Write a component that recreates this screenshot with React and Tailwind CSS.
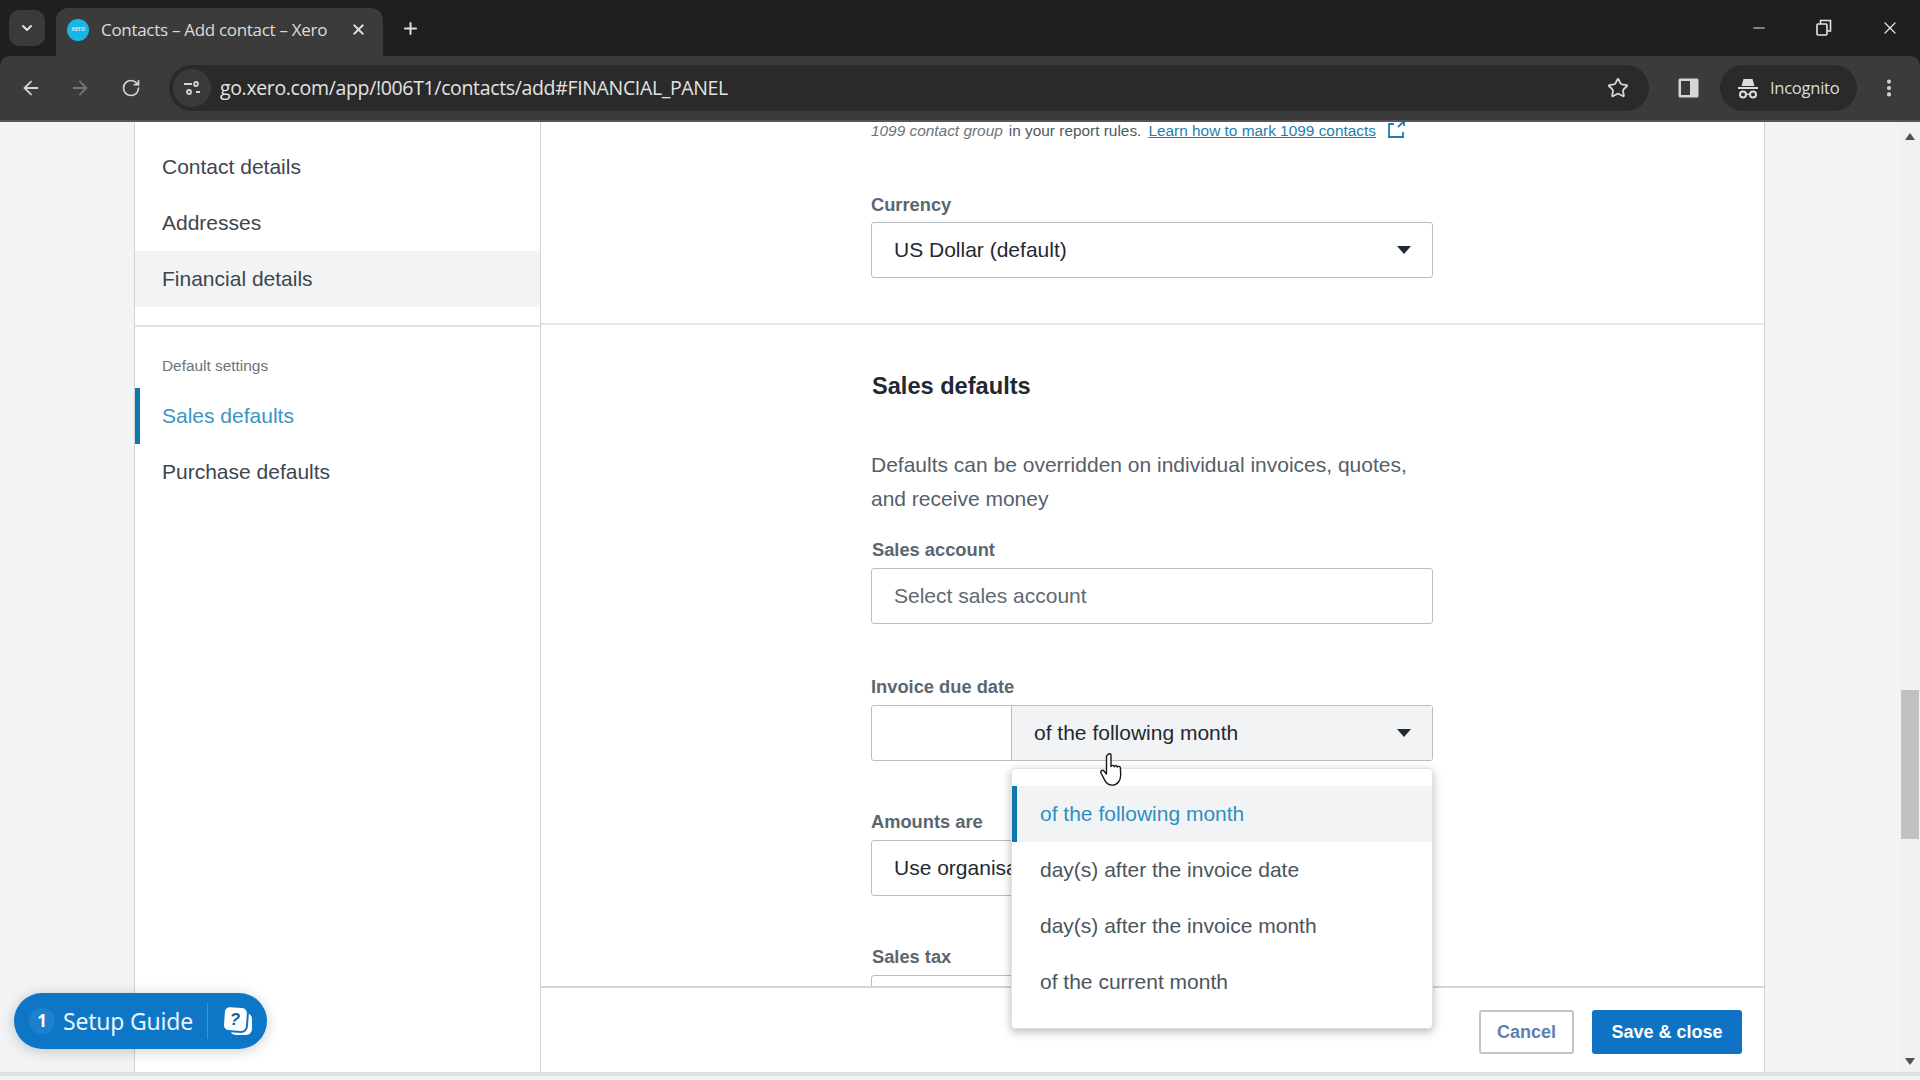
import { ArrowLeft, ArrowRight, RotateCw, Star, X, Plus, Minus, ChevronDown, EllipsisVertical } from "lucide-react";

const OPTIONS = ["of the following month", "day(s) after the invoice date", "day(s) after the invoice month", "of the current month"];

const Caret = () => (
  <svg width="14" height="8" viewBox="0 0 14 8" className="absolute right-[21px] top-1/2 -translate-y-1/2">
    <path d="M0 0h14L7 8z" fill="#1f2933" />
  </svg>
);

const Label = ({ children, className = "" }) => (
  <div className={`text-[18.3px] leading-[22px] font-bold text-[#5a6670] ${className}`}>{children}</div>
);

const Field = ({ children, className = "" }) => (
  <div className={`relative h-[56px] w-[562px] rounded-[3px] border border-[#b8bdc2] bg-white flex items-center pl-[22px] text-[21px] text-[#1f2933] ${className}`}>
    {children}
  </div>
);

const SideItem = ({ children, className = "" }) => (
  <div className={`h-[56px] flex items-center pl-[27px] text-[21px] text-[#3c4650] ${className}`}>{children}</div>
);

const IncognitoIcon = () => (
  <svg width="22" height="21" viewBox="0 0 22 21" fill="#dcdcdc">
    <path d="M6.500 1h9l2 7h-13z" />
    <rect x="1" y="9" width="20" height="2" />
    <circle cx="6" cy="16.500" r="3" fill="none" stroke="#dcdcdc" strokeWidth="2" />
    <circle cx="16" cy="16.500" r="3" fill="none" stroke="#dcdcdc" strokeWidth="2" />
    <rect x="9" y="15.500" width="4" height="1.500" />
  </svg>
);

const HandCursor = () => (
  <svg width="26" height="36" viewBox="0 0 26 36" className="absolute left-[1099px] top-[752px]">
    <path d="M9 2.500c1.300-1.500 3-.8 3 1v11c.3-1.500 3-1.500 3.200.2 .3-1.500 3-1.300 3.200.4 .4-1.200 2.900-.9 3 1l.3 7c0 5-3 10-8.500 10-4 0-6-2-7.500-5L2 21c-1-2 1.500-3.500 3-2l2.500 3V4z" fill="#fff" stroke="#16181a" strokeWidth="1.400" strokeLinejoin="round" />
  </svg>
);

const HelpIcon = () => (
  <svg width="30" height="30" viewBox="0 0 30 30">
    <rect x="7" y="7" width="22" height="22" rx="6" fill="#fff" />
    <rect x="0.500" y="0.500" width="24" height="25" rx="6" fill="#fff" stroke="#0e76c6" strokeWidth="2" transform="rotate(4 12 12)" />
    <text x="12" y="19" textAnchor="middle" fontSize="17" fontWeight="700" fontStyle="italic" fill="#0e5f9e" fontFamily="Liberation Sans, sans-serif">?</text>
  </svg>
);

export default function App() {
  return (
    <div className="relative h-[1080px] w-[1920px] overflow-hidden bg-[#f2f3f4] font-['Liberation_Sans',Arial,sans-serif]">
      <div className="bg-[#1f1f1f]">
        {/* tab strip */}
        <div className="h-[56px] flex items-end relative">
          <div className="absolute left-[9px] top-[10px] w-[36px] h-[36px] rounded-[10px] bg-[#3a3a3a] flex items-center justify-center">
            <ChevronDown size={16} color="#e0e0e0" strokeWidth={3} />
          </div>
          <div className="ml-[56px] w-[327px] h-[48px] bg-[#3b3b3b] rounded-t-[12px] flex items-center pl-[11px] pr-[16px] pb-[5px]">
            <div className="w-[22px] h-[22px] rounded-full bg-[#19b5e6] flex items-center justify-center text-[7px] text-white">xero</div>
            <span className="ml-[12px] text-[17px] text-[#dcdcdc] font-['Open_Sans',sans-serif] tracking-[-0.3px]">Contacts – Add contact – Xero</span>
            <X size={17} color="#e0e0e0" strokeWidth={2.5} className="ml-auto" />
          </div>
          <Plus size={19} color="#e0e0e0" strokeWidth={2.5} className="ml-[18px] mb-[18px]" />
          <div className="ml-auto flex items-center h-full pr-[20px] gap-[47px]">
            <Minus size={18} color="#e6e6e6" strokeWidth={1.5} />
            <svg width="18" height="20" viewBox="0 0 18 20" fill="none" stroke="#e6e6e6" strokeWidth="1.600">
              <rect x="2" y="6" width="10" height="11" rx="1" />
              <path d="M5.500 6V2.500h10V13H12" />
            </svg>
            <X size={20} color="#e6e6e6" strokeWidth={1.5} />
          </div>
        </div>

        {/* toolbar */}
        <div className="h-[66px] bg-[#3b3b3b] rounded-t-[10px] border-b-2 border-[#555] flex items-center">
          <ArrowLeft size={22} color="#d5d5d5" strokeWidth={2} className="ml-[20px]" />
          <ArrowRight size={22} color="#777" strokeWidth={2} className="ml-[27px]" />
          <RotateCw size={20} color="#d5d5d5" strokeWidth={2} className="ml-[30px]" />
          <div className="ml-[28px] w-[1480px] h-[46px] rounded-full bg-[#2a2a2a] flex items-center pr-[20px]">
            <div className="ml-[4px] w-[38px] h-[38px] rounded-full bg-[#3a3a3a] flex items-center justify-center">
              <svg width="18" height="16" viewBox="0 0 18 16" fill="none" stroke="#d5d5d5" strokeWidth="1.800">
                <path d="M1 4h8M13 12h4" />
                <circle cx="13" cy="4" r="2" />
                <circle cx="6" cy="12" r="2" />
              </svg>
            </div>
            <span className="ml-[9px] text-[19.5px] text-[#e3e3e3] font-['Open_Sans',sans-serif] tracking-[-0.35px]">go.xero.com/app/!006T1/contacts/add#FINANCIAL_PANEL</span>
            <Star size={22} color="#d5d5d5" strokeWidth={2} className="ml-auto" />
          </div>
          <svg width="21" height="20" viewBox="0 0 21 20" className="ml-[29px]">
            <rect x="0.500" y="0.500" width="20" height="19" rx="1.500" fill="#d5d5d5" />
            <rect x="3" y="3" width="9" height="14" fill="#3b3b3b" />
          </svg>
          <div className="ml-[21px] w-[137px] h-[46px] rounded-full bg-[#2a2a2a] flex items-center pl-[17px] gap-[11px]">
            <IncognitoIcon />
            <span className="text-[16.6px] text-[#dcdcdc] font-['Open_Sans',sans-serif] tracking-[-0.3px]">Incognito</span>
          </div>
          <EllipsisVertical size={22} color="#d5d5d5" strokeWidth={2.5} className="ml-[21px]" />
        </div>
      </div>

      {/* page */}
      <div className="flex h-[954px] border-b-4 border-[#dfe1e3]">
        <div className="w-[134px] shrink-0" />

        {/* sidebar */}
        <div className="w-[407px] shrink-0 bg-white border-x border-[#cfd2d4] pt-[17px]">
          <SideItem>Contact details</SideItem>
          <SideItem>Addresses</SideItem>
          <SideItem className="bg-[#f2f3f4]">Financial details</SideItem>
          <div className="mt-[18px] border-t-2 border-[#e1e3e5] pt-[29px] pl-[27px] text-[15.4px] leading-[20px] text-[#6b747c]">Default settings</div>
          <SideItem className="mt-[12px] border-l-[5px] border-[#0f76ae] !pl-[22px] !text-[#3a94c4]">Sales defaults</SideItem>
          <SideItem>Purchase defaults</SideItem>
        </div>

        {/* main column */}
        <div className="w-[1224px] shrink-0 bg-white border-r border-[#cfd2d4] flex flex-col">
          <div className="h-[864px] overflow-hidden">
            <div className="pl-[330px]">
              <div className="h-[18px] text-[15.4px] leading-[18px] text-[#4f5961] flex items-center whitespace-nowrap">
                <span className="italic text-[#6b747c]">1099 contact group</span>
                <span className="ml-[6px]">in your report rules.</span>
                <span className="ml-[7px] text-[#1e7fae] underline">Learn how to mark 1099 contacts</span>
                <svg width="18" height="18" viewBox="0 0 18 18" fill="none" stroke="#1e7fae" strokeWidth="1.800" className="ml-[11px] -mt-[4px]">
                  <path d="M7 4H2v13h14v-5M17 1l-6 6M12 1h5v5" />
                </svg>
              </div>
              <Label className="mt-[54px]">Currency</Label>
              <div className="mt-[6px]">
                <Field>US Dollar (default)<Caret /></Field>
              </div>
            </div>

            <div className="mt-[45px] border-t-2 border-[#e4e6e8] pl-[330px] pt-[48px]">
              <div className="ml-[1px] text-[23.6px] leading-[26px] font-bold text-[#1f2933]">Sales defaults</div>
              <div className="mt-[49px] w-[562px] text-[21px] leading-[34px] text-[#55606a]">
                Defaults can be overridden on individual invoices, quotes, and receive money
              </div>
              <Label className="mt-[23px] ml-[1px]">Sales account</Label>
              <Field className="mt-[7px] !text-[#5f6972]">Select sales account</Field>
              <Label className="mt-[52px]">Invoice due date</Label>
              <div className="mt-[7px] relative h-[56px] w-[562px] rounded-[3px] border border-[#b8bdc2] flex">
                <div className="w-[139px] bg-white rounded-l-[3px]" />
                <div className="flex-1 relative border-l border-[#b8bdc2] bg-[#f2f3f4] flex items-center pl-[22px] text-[21px] text-[#1f2933]">
                  of the following month<Caret />
                </div>
              </div>
              <Label className="mt-[50px]">Amounts are</Label>
              <Field className="mt-[7px]">
                <span className="w-[117px] overflow-hidden whitespace-nowrap">Use organisation settings</span>
                <Caret />
              </Field>
              <Label className="mt-[50px] ml-[1px]">Sales tax</Label>
              <Field className="mt-[7px]" />
            </div>
          </div>

          {/* footer */}
          <div className="flex-1 border-t-2 border-[#d3d6d8] flex justify-end items-start pt-[22px] pr-[22px] gap-[18px]">
            <button className="w-[95px] h-[44px] rounded-[3px] border-2 border-[#c4c7ca] bg-white text-[18px] font-bold text-[#5f7fae]">Cancel</button>
            <button className="w-[150px] h-[44px] rounded-[3px] bg-[#0e73c4] text-[18px] font-bold text-white">Save &amp; close</button>
          </div>
        </div>

        <div className="flex-1" />

        {/* scrollbar */}
        <div className="w-[20px] shrink-0 bg-[#f1f1f1] flex flex-col items-center relative">
          <svg width="10" height="7" viewBox="0 0 10 7" className="mt-[11px]"><path d="M5 0l5 7H0z" fill="#505050" /></svg>
          <div className="mt-[550px] w-[18px] h-[149px] bg-[#c1c1c1]" />
          <svg width="10" height="7" viewBox="0 0 10 7" className="mt-auto mb-[7px]"><path d="M0 0h10L5 7z" fill="#505050" /></svg>
        </div>
      </div>

      {/* dropdown list */}
      <div className="absolute left-[1011px] top-[768px] w-[422px] h-[261px] bg-white rounded-[4px] border border-[#dfe1e3] shadow-[0_3px_10px_rgba(0,0,0,0.28)] pt-[17px]">
        {OPTIONS.map((o, i) => (
          <div key={o} className={`h-[56px] flex items-center text-[21px] pl-[28px] ${i === 0 ? "bg-[#f2f3f4] text-[#2f8fc0] border-l-[5px] border-[#0f76ae] !pl-[23px]" : "text-[#4b555e]"}`}>
            {o}
          </div>
        ))}
      </div>

      <HandCursor />

      {/* setup guide */}
      <div className="absolute left-[14px] top-[993px] w-[253px] h-[56px] rounded-full bg-[#0e76c6] shadow-[0_2px_14px_rgba(0,0,0,0.2)] flex items-center text-white font-['Noto_Sans',sans-serif]">
        <div className="ml-[15px] w-[26px] h-[26px] rounded-full bg-[#1c80cc] flex items-center justify-center text-[17px] font-bold">1</div>
        <span className="ml-[8px] text-[23px] tracking-[-0.2px] text-[#e8f4fc]">Setup Guide</span>
        <div className="ml-[14px] h-[36px] border-l border-[#3f93d3]" />
        <div className="ml-[15px]"><HelpIcon /></div>
      </div>
    </div>
  );
}
